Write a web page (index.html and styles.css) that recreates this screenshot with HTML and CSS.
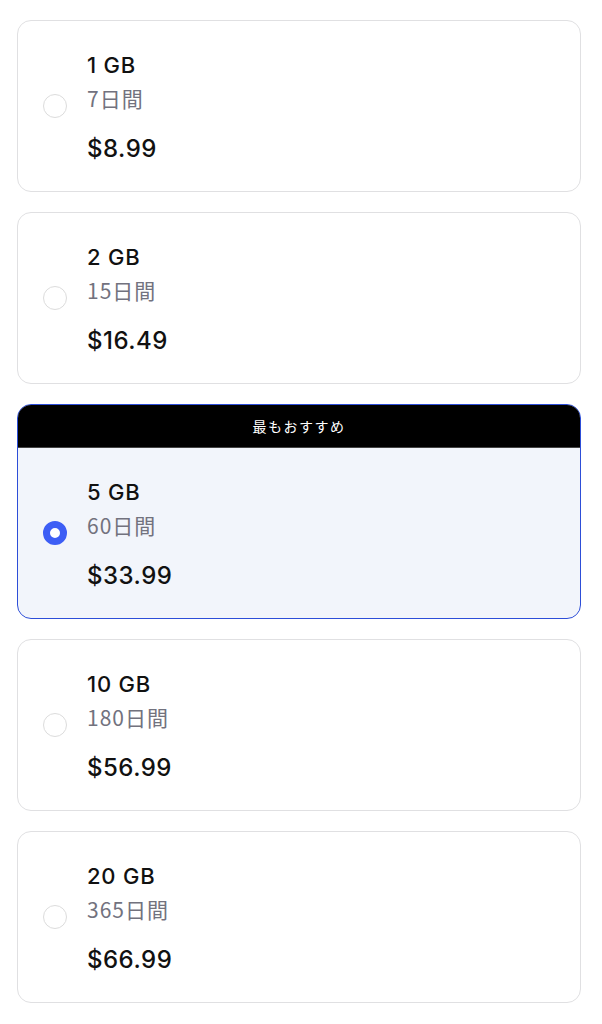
FILE: index.html
```html
<!DOCTYPE html>
<html lang="ja">
<head>
<meta charset="utf-8">
<link rel="stylesheet" href="styles.css">
</head>
<body>
<main class="plans">
  <label class="card">
    <div class="body">
      <span class="radio"></span>
      <div class="info">
        <div class="title">1 GB</div>
        <div class="days">7日間</div>
        <div class="price">$8.99</div>
      </div>
    </div>
  </label>
  <label class="card">
    <div class="body">
      <span class="radio"></span>
      <div class="info">
        <div class="title">2 GB</div>
        <div class="days">15日間</div>
        <div class="price">$16.49</div>
      </div>
    </div>
  </label>
  <label class="card selected">
    <div class="badge">最もおすすめ</div>
    <div class="body">
      <span class="radio on"></span>
      <div class="info">
        <div class="title">5 GB</div>
        <div class="days">60日間</div>
        <div class="price">$33.99</div>
      </div>
    </div>
  </label>
  <label class="card">
    <div class="body">
      <span class="radio"></span>
      <div class="info">
        <div class="title">10 GB</div>
        <div class="days">180日間</div>
        <div class="price">$56.99</div>
      </div>
    </div>
  </label>
  <label class="card">
    <div class="body">
      <span class="radio"></span>
      <div class="info">
        <div class="title">20 GB</div>
        <div class="days">365日間</div>
        <div class="price">$66.99</div>
      </div>
    </div>
  </label>
</main>
</body>
</html>
```
FILE: styles.css
```css
html, body {
  margin: 0;
  padding: 0;
  background: #ffffff;
}
body {
  font-family: "Inter", "Noto Sans CJK JP", sans-serif;
  color: #111111;
}
.plans {
  display: flex;
  flex-direction: column;
  gap: 20px;
  padding: 20px 21px 20px 17px;
}
.card {
  display: block;
  border: 1px solid #e0e0e2;
  border-radius: 14px;
  background: #ffffff;
  overflow: hidden;
}
.card.selected {
  border-color: #2d4ed8;
  background: #f2f5fb;
}
.badge {
  height: 43px;
  background: #000000;
  color: #ffffff;
  font-size: 14px;
  letter-spacing: 1.5px;
  font-family: "Noto Sans CJK JP", sans-serif;
  display: flex;
  align-items: center;
  justify-content: center;
  border-bottom: 1px solid #444;
  box-sizing: border-box;
}
.body {
  height: 170px;
  display: flex;
  align-items: center;
  padding-left: 25px;
  gap: 20px;
}
.radio {
  width: 24px;
  height: 24px;
  border-radius: 50%;
  border: 1.5px solid #dcdcdc;
  box-sizing: border-box;
  background: #fff;
  flex: none;
}
.radio.on {
  border: 7px solid #3d5ef5;
}
.info {
  display: flex;
  flex-direction: column;
  padding-top: 4px;
}
.title {
  font-size: 22px;
  line-height: 30px;
  font-weight: 500;
  letter-spacing: 0.8px;
}
.days {
  font-size: 21px;
  line-height: 30px;
  color: #72727e;
  font-family: "Noto Sans CJK JP", sans-serif;
  letter-spacing: 1px;
  margin-top: 3px;
}
.price {
  font-size: 24px;
  line-height: 34px;
  font-weight: 500;
  letter-spacing: 0.5px;
  margin-top: 19px;
}
```
